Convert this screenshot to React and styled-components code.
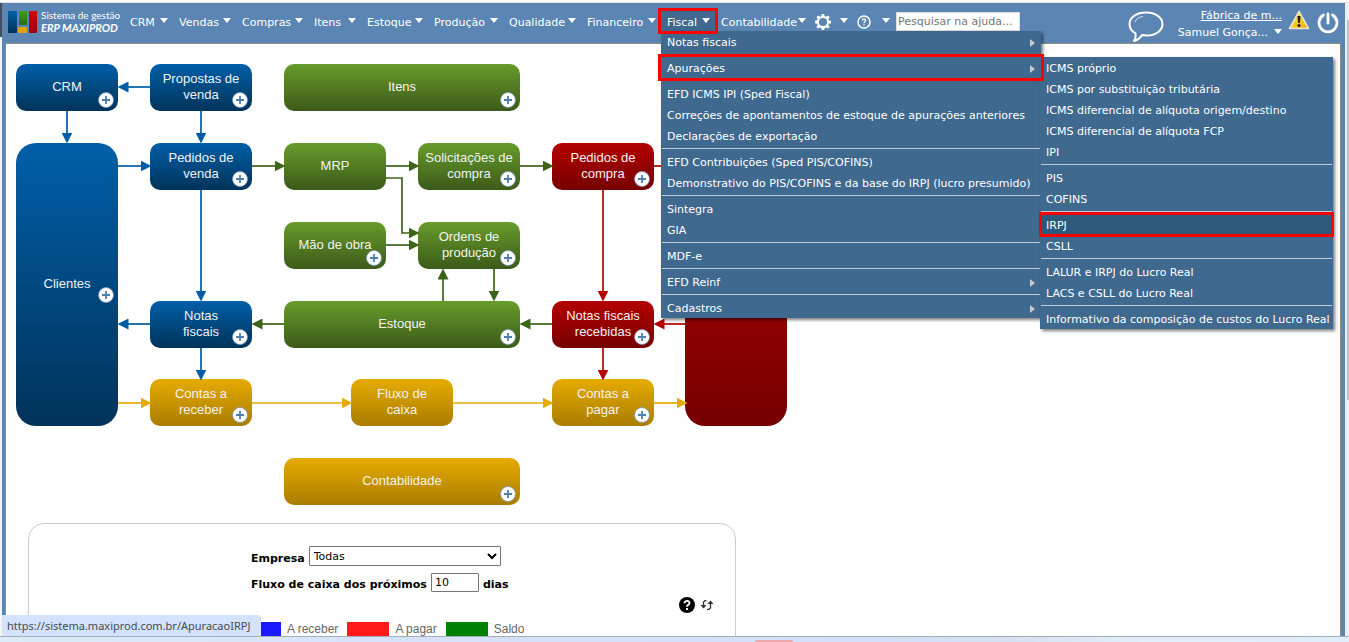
import React from "react";
import styled, { createGlobalStyle, css } from "styled-components";

const GlobalStyle = createGlobalStyle`
  * { box-sizing: border-box; }
  html, body, #root { height: 100%; }
  body { margin: 0; overflow: hidden; background: #f1f1f1; font-family: "DejaVu Sans", sans-serif; font-size: 11px; }
  ul { list-style: none; margin: 0; padding: 0; }
  button, input, select { font: inherit; }
`;

const Window = styled.div`
  height: 100vh;
  display: grid;
  grid-template-rows: 3px minmax(0, 1fr) 6px;
`;

const TopEdge = styled.div`
  background: #fff;
  border-bottom: 1px solid #dedede;
`;

const Viewport = styled.div`
  display: flex;
  min-height: 0;
`;

const LeftEdge = styled.div`
  width: 2px;
  background: linear-gradient(#46505a 34px, #f4f4f4 34px);
`;

const ScrollTrack = styled.div`
  width: 4px;
  padding-top: 17px;
  background: #f1f1f1;
`;

const ScrollThumb = styled.div`
  height: 380px;
  margin-left: 2px;
  background: #c1c1c1;
`;

const Frame = styled.div`
  flex: 1;
  min-width: 0;
  display: flex;
  flex-direction: column;
  background: #5b86b3;
  padding: 0 4px 0 3px;
`;

const Header = styled.header`
  height: 40px;
  flex: none;
  display: flex;
  align-items: flex-start;
  padding-top: 8px;
`;

const Brand = styled.a`
  display: flex;
  gap: 3px;
  width: 119px;
  padding-left: 3px;
  color: #fff;
  text-decoration: none;
  font-family: Lato, sans-serif;
  white-space: nowrap;
`;

const BrandText = styled.span`
  display: flex;
  flex-direction: column;
  margin-top: -2px;
  font-size: 10px;
  line-height: 12px;
`;

const BrandName = styled.em`
  font-size: 11px;
  font-weight: 700;
  line-height: 13px;
`;

const Nav = styled.ul`
  display: flex;
`;

const NavItem = styled.li`
  position: relative;
  width: ${(p) => p.$w}px;
`;

const marker = css`
  &::after {
    content: "";
    position: absolute;
    inset: ${(p) => (p.$tight ? "-2px -1px" : "-3px")};
    z-index: 6;
    border: 3px solid #f00;
    pointer-events: none;
  }
`;

const NavButton = styled.button`
  position: relative;
  display: flex;
  width: 100%;
  height: 20px;
  align-items: center;
  justify-content: space-between;
  padding: 2px ${(p) => (p.$snug ? 3 : 5)}px 0 6px;
  border: 0;
  background: ${(p) => (p.$open ? "#40698f" : "transparent")};
  color: #fff;
  white-space: nowrap;
  ${(p) => p.$open && marker}
`;

const Caret = styled.i`
  border: solid transparent;
  border-width: 5px 4px 0;
  border-top-color: #fff;
  margin-bottom: 3px;
`;

const Menu = styled.ul`
  position: absolute;
  z-index: 5;
  top: ${(p) => (p.$sub ? "0" : "100%")};
  left: ${(p) => (p.$sub ? "379px" : "0")};
  width: ${(p) => (p.$sub ? "293px" : "380px")};
  background: #40698f;
  box-shadow: 2px 2px 3px rgba(0, 0, 0, 0.5);
`;

const MenuItem = styled.li`
  position: relative;
  ${(p) => p.$marked && css`z-index: 1;`}
  ${(p) => p.$marked && marker}
`;

const MenuLink = styled.a`
  display: flex;
  align-items: center;
  justify-content: space-between;
  height: 21px;
  padding: 2px 6px 0;
  color: #fff;
  background: ${(p) => (p.$active ? "#2e587c" : "transparent")};
  text-decoration: none;
  white-space: nowrap;
`;

const MenuArrow = styled.i`
  border: 4px solid transparent;
  border-left: 5px solid #c9c9c9;
  border-right: 0;
`;

const MenuLine = styled.li`
  height: 1px;
  margin: 2px 1px;
  background: #c3ccd5;
`;

const Search = styled.input`
  width: 124px;
  height: 19px;
  margin: 1px 0 0 3px;
  padding: 0 1px;
  border: 1px solid #ddd;
  background: #fff;
  &::placeholder { color: #757575; opacity: 1; }
`;

const Account = styled.div`
  margin: -3px 0 0 auto;
  display: flex;
  align-items: flex-start;
  padding-right: 2px;
  color: #fff;
`;

const User = styled.div`
  display: flex;
  flex-direction: column;
  align-items: flex-end;
  width: 118px;
  margin-top: -1px;
  line-height: 17px;
`;

const UserLink = styled.a`
  color: #fff;
`;

const UserButton = styled.button`
  display: flex;
  align-items: center;
  gap: 6px;
  padding: 0;
  border: 0;
  background: none;
  color: #fff;
  line-height: 17px;
`;

const AccountIcons = styled.div`
  display: flex;
  gap: 7px;
  padding: 2px 0 0 6px;
`;

const IconButton = styled.button`
  display: flex;
  padding: 0;
  border: 0;
  background: none;
`;

const Content = styled.main`
  flex: 1;
  min-height: 0;
  overflow: hidden;
  background: #fff;
  border: 1px solid #8d8d86;
  border-bottom: 0;
`;

const Diagram = styled.section`
  position: relative;
  height: 479px;
`;

const Arrows = styled.svg`
  position: absolute;
  left: 0;
  top: 0;
  pointer-events: none;
`;

const tones = {
  blue: ["#005fa8", "#00335a"],
  green: ["#679c2b", "#3c5a19"],
  red: ["#b40000", "#760000"],
  gold: ["#e6ab00", "#a97d00"],
};

const Node = styled.div`
  position: absolute;
  left: ${(p) => p.$x}px;
  top: ${(p) => p.$y}px;
  width: ${(p) => p.$w || 102}px;
  height: ${(p) => p.$h || 47}px;
  display: flex;
  align-items: center;
  justify-content: center;
  padding-bottom: 2px;
  border-radius: ${(p) => (p.$h ? 20 : 10)}px;
  background: linear-gradient(${(p) => tones[p.$tone][0]}, ${(p) => tones[p.$tone][1]});
  color: #f2f2f2;
  font: 13px/16px "Liberation Sans", Arial, sans-serif;
  text-align: center;
  white-space: pre-line;
`;

const Plus = styled.button`
  position: absolute;
  right: 4px;
  top: ${(p) => (p.$tall ? "144px" : "28px")};
  display: flex;
  padding: 0;
  border: 0;
  background: none;
`;

const Panel = styled.section`
  width: 708px;
  height: 240px;
  margin-left: 22px;
  padding-top: 22px;
  border: 1px solid #ccc;
  border-radius: 16px;
`;

const Filters = styled.form`
  margin-left: 222px;
  display: grid;
  grid-template-columns: 250px;
  gap: 6px;
  font: bold 11px/15px "DejaVu Sans", sans-serif;
`;

const Field = styled.label`
  display: flex;
  align-items: flex-end;
  gap: 4px;
  height: 20px;
  white-space: nowrap;
`;

const Select = styled.select`
  flex: 1;
  height: 20px;
  padding: 0;
  border: 1px solid #767676;
  border-radius: 1px;
  background: #fff;
  color: #000;
  font: 11px "DejaVu Sans", sans-serif;
`;

const Days = styled.input`
  width: 48px;
  height: 19px;
  padding: 0 3px;
  border: 1px solid #767676;
  border-radius: 1px;
  font: 11px "DejaVu Sans", sans-serif;
`;

const Tools = styled.div`
  display: flex;
  justify-content: flex-end;
  gap: 5px;
  padding: 5px 21px 0 0;
`;

const Legend = styled.ul`
  display: flex;
  gap: 9px;
  margin: 9px 0 0 210px;
  font: 12px/14px "Liberation Sans", Arial, sans-serif;
  color: #666;
`;

const LegendItem = styled.li`
  display: flex;
  gap: 6px;
`;

const Swatch = styled.span`
  width: 42px;
  height: 16px;
  background: ${(p) => p.$color};
`;

const StatusBubble = styled.div`
  position: fixed;
  left: 2px;
  bottom: 6px;
  height: 21px;
  min-width: 259px;
  padding: 0 6px 0 5px;
  border-radius: 0 4px 0 0;
  background: #d3e3fd;
  color: #474b50;
  font: 11px/21px "Noto Sans", sans-serif;
`;

const Taskbar = styled.footer`
  border-top: 1px solid #a5adb5;
  background: linear-gradient(90deg, #dcebf8, #d6e2fa 30%, #d3dff8 65%, #d5e0f2 75%, #e2effa 85%, #e0ecfb);
  display: flex;
  align-items: flex-end;
`;

const TaskMark = styled.span`
  width: 38px;
  height: 2px;
  margin-left: 56%;
  background: #eba9ab;
  border-radius: 2px 2px 0 0;
`;

function LogoMark() {
  return (
    <svg width="30" height="22" viewBox="0 0 30 22" aria-hidden="true">
      <defs>
        <linearGradient id="lb" x2="0" y2="1"><stop stopColor="#005fa8" /><stop offset="1" stopColor="#00335a" /></linearGradient>
        <linearGradient id="lg" x2="0" y2="1"><stop stopColor="#43a012" /><stop offset="1" stopColor="#2a6a10" /></linearGradient>
        <linearGradient id="lr" x2="0" y2="1"><stop stopColor="#d60000" /><stop offset="1" stopColor="#9c0010" /></linearGradient>
      </defs>
      <rect width="9" height="22" rx="1" fill="url(#lb)" />
      <rect x="11" width="8" height="14" rx="1" fill="url(#lg)" />
      <rect x="10" y="16" width="9" height="6" rx="1" fill="#dfa30c" />
      <rect x="21" width="8" height="22" rx="1" fill="url(#lr)" />
    </svg>
  );
}

function Gear() {
  return (
    <svg width="16" height="16" viewBox="0 0 16 16" fill="#fff" aria-hidden="true">
      <path fillRule="evenodd" d="M6.800 0h2.400l.5 2.200 1.300.5L13 1.500l1.700 1.700-1.300 1.900.5 1.300 2.100.4v2.400l-2.100.5-.5 1.300 1.200 1.900-1.700 1.700-1.900-1.200-1.300.5-.5 2.100H6.800l-.5-2.100-1.300-.5-1.900 1.200-1.700-1.700 1.200-1.900-.5-1.300L0 9.200V6.800l2.200-.5.5-1.300-1.200-1.900 1.700-1.700 1.900 1.300 1.300-.5ZM8 3.900a4.100 4.100 0 1 0 0 8.200 4.100 4.100 0 0 0 0-8.200Z" />
    </svg>
  );
}

function HelpRing() {
  return (
    <svg width="14" height="14" viewBox="0 0 14 14" fill="none" stroke="#fff" aria-hidden="true">
      <circle cx="7" cy="7" r="6" strokeWidth="1.500" />
      <path d="M5.300 5.500c0-2.300 3.500-2.100 3.300-.2C8.500 6.500 7 6.500 7 8.200M7 9.200v1.300" strokeWidth="1.200" />
    </svg>
  );
}

function Bubble() {
  return (
    <svg width="36" height="34" viewBox="0 0 36 34" fill="none" stroke="#fff" aria-hidden="true">
      <path d="M18 4.500c9.500 0 16.500 5 16.500 11.500S28 27.500 18.500 27.500c-1.500 0-3-.1-4.500-.4-2 3-4.500 5-8 5.900 1.500-2.300 2-4.700 1.400-7.700C3.500 23 1.500 20 1.500 16 1.500 9.500 8.500 4.500 18 4.500Z" strokeWidth="2" strokeLinejoin="round" />
      <path d="M7 14c1-3 4-5 8-5.500" strokeWidth="1" opacity=".8" />
    </svg>
  );
}

function Warning() {
  return (
    <svg width="22" height="20" viewBox="0 0 22 20" aria-hidden="true">
      <defs>
        <linearGradient id="warn" x2="1" y2="1"><stop stopColor="#fff04a" /><stop offset="1" stopColor="#f0a800" /></linearGradient>
      </defs>
      <path d="M11 1.500 20.500 18.500h-19Z" fill="url(#warn)" stroke="#e8e4d0" strokeWidth="1.600" strokeLinejoin="round" />
      <path d="M9.400 6h3.200l-.7 7h-1.800Z" fill="#222" />
      <circle cx="11" cy="15.500" r="1.600" fill="#222" />
    </svg>
  );
}

function Power() {
  return (
    <svg width="22" height="24" viewBox="0 0 22 24" fill="none" stroke="#fff" strokeWidth="2.800" strokeLinecap="round" aria-hidden="true">
      <path d="M6.500 5a9 9 0 1 0 9 0M11 4v9" />
    </svg>
  );
}

function PlusIcon() {
  return (
    <svg width="16" height="16" viewBox="0 0 16 16" aria-hidden="true">
      <circle cx="8" cy="8" r="7.500" fill="#fff" stroke="#7895bb" strokeWidth=".8" />
      <path d="M8 4v8M4 8h8" stroke="#4d7eb0" strokeWidth="1.800" />
    </svg>
  );
}

const navBefore = [["CRM", 49], ["Vendas", 63], ["Compras", 72], ["Itens", 53], ["Estoque", 67], ["Produção", 75], ["Qualidade", 78], ["Financeiro", 80]];

const apuracoes = [
  "ICMS próprio", "ICMS por substituição tributária", "ICMS diferencial de alíquota origem/destino", "ICMS diferencial de alíquota FCP", "IPI", null,
  "PIS", "COFINS", null, "IRPJ", "CSLL", null,
  "LALUR e IRPJ do Lucro Real", "LACS e CSLL do Lucro Real", null, "Informativo da composição de custos do Lucro Real",
];

const fiscal = [
  { t: "Notas fiscais", more: true }, null, { t: "Apurações", more: true, sub: apuracoes }, null,
  { t: "EFD ICMS IPI (Sped Fiscal)" }, { t: "Correções de apontamentos de estoque de apurações anteriores" }, { t: "Declarações de exportação" }, null,
  { t: "EFD Contribuições (Sped PIS/COFINS)" }, { t: "Demonstrativo do PIS/COFINS e da base do IRPJ (lucro presumido)" }, null,
  { t: "Sintegra" }, { t: "GIA" }, null, { t: "MDF-e" }, null, { t: "EFD Reinf", more: true }, null, { t: "Cadastros", more: true },
];

const nodes = [
  { t: "CRM", x: 10, y: 20, tone: "blue", plus: true },
  { t: "Propostas de\nvenda", x: 144, y: 20, tone: "blue", plus: true },
  { t: "Itens", x: 278, y: 20, w: 236, tone: "green", plus: true },
  { t: "Clientes", x: 10, y: 99, h: 283, tone: "blue", plus: true },
  { t: "Pedidos de\nvenda", x: 144, y: 99, tone: "blue", plus: true },
  { t: "MRP", x: 278, y: 99, tone: "green" },
  { t: "Solicitações de\ncompra", x: 412, y: 99, tone: "green", plus: true },
  { t: "Pedidos de\ncompra", x: 546, y: 99, tone: "red", plus: true },
  { t: "", x: 679, y: 99, h: 283, tone: "red" },
  { t: "Mão de obra", x: 278, y: 178, tone: "green", plus: true },
  { t: "Ordens de\nprodução", x: 412, y: 178, tone: "green", plus: true },
  { t: "Notas\nfiscais", x: 144, y: 257, tone: "blue", plus: true },
  { t: "Estoque", x: 278, y: 257, w: 236, tone: "green", plus: true },
  { t: "Notas fiscais\nrecebidas", x: 546, y: 257, tone: "red", plus: true },
  { t: "Contas a\nreceber", x: 144, y: 335, tone: "gold", plus: true },
  { t: "Fluxo de\ncaixa", x: 345, y: 335, tone: "gold" },
  { t: "Contas a\npagar", x: 546, y: 335, tone: "gold", plus: true },
  { t: "Contabilidade", x: 278, y: 414, w: 236, tone: "gold", plus: true },
];

const lineColors = { blue: "#005ca6", green: "#3c6318", red: "#b40000", gold: "#e6ab00" };

const links = [
  ["blue", "M144 43H117"], ["blue", "M61 67V94"], ["blue", "M195 67V94"], ["blue", "M112 122H140"],
  ["blue", "M195 146V252"], ["blue", "M144 280H117"], ["blue", "M195 304V331"],
  ["green", "M246 122H274"], ["green", "M380 122H408"], ["green", "M380 134H396V189H408"], ["green", "M380 201H408"],
  ["green", "M514 122H542"], ["green", "M437 257V230"], ["green", "M488 225V252"], ["green", "M278 280H251"], ["green", "M546 280H519"],
  ["red", "M597 146V252"], ["red", "M648 122H675"], ["red", "M679 280H653"], ["red", "M597 304V331"],
  ["gold", "M112 359H140"], ["gold", "M246 359H341"], ["gold", "M447 359H542"], ["gold", "M648 359H676"],
];

function Flow() {
  return (
    <Diagram>
      {nodes.map((n, i) => (
        <Node key={i} $x={n.x} $y={n.y} $w={n.w} $h={n.h} $tone={n.tone}>
          {n.t}
          {n.plus && <Plus type="button" aria-label={"Novo: " + n.t} $tall={!!n.h}><PlusIcon /></Plus>}
        </Node>
      ))}
      <Arrows width="800" height="479" fill="none" strokeWidth="1.700" aria-hidden="true">
        <defs>
          {Object.entries(lineColors).map(([k, c]) => (
            <marker key={k} id={"tip-" + k} viewBox="0 0 10 10" refX="5" refY="5" markerWidth="11" markerHeight="11" markerUnits="userSpaceOnUse" orient="auto">
              <path d="M0 0 10 5 0 10Z" fill={c} />
            </marker>
          ))}
        </defs>
        {links.map(([k, d]) => <path key={d} d={d} stroke={lineColors[k]} markerEnd={`url(#tip-${k})`} />)}
      </Arrows>
    </Diagram>
  );
}

function FiscalMenu() {
  return (
    <Menu>
      {fiscal.map((m, i) => m ? (
        <MenuItem key={i} $marked={!!m.sub}>
          <MenuLink href="#">{m.t}{m.more && <MenuArrow />}</MenuLink>
          {m.sub && (
            <Menu $sub>
              {m.sub.map((s, j) => s ? (
                <MenuItem key={j} $tight $marked={s === "IRPJ"}><MenuLink href="#" $active={s === "IRPJ"}>{s}</MenuLink></MenuItem>
              ) : <MenuLine key={j} />)}
            </Menu>
          )}
        </MenuItem>
      ) : <MenuLine key={i} />)}
    </Menu>
  );
}

export default function App() {
  return (
    <>
      <GlobalStyle />
      <Window>
        <TopEdge />
        <Viewport>
          <LeftEdge />
          <Frame>
            <Header>
              <Brand href="#">
                <LogoMark />
                <BrandText>Sistema de gestão<BrandName>ERP MAXIPROD</BrandName></BrandText>
              </Brand>
              <Nav>
                {navBefore.map(([t, w]) => (
                  <NavItem key={t} $w={w}><NavButton type="button">{t}<Caret /></NavButton></NavItem>
                ))}
                <NavItem $w={54}>
                  <NavButton type="button" $open>Fiscal<Caret /></NavButton>
                  <FiscalMenu />
                </NavItem>
                <NavItem $w={94}><NavButton type="button" $snug>Contabilidade<Caret /></NavButton></NavItem>
                <NavItem $w={42}><NavButton type="button" $snug aria-label="Configurações"><Gear /><Caret /></NavButton></NavItem>
                <NavItem $w={42}><NavButton type="button" $snug aria-label="Ajuda"><HelpRing /><Caret /></NavButton></NavItem>
              </Nav>
              <Search aria-label="Pesquisar na ajuda" placeholder="Pesquisar na ajuda..." />
              <Account>
                <IconButton type="button" aria-label="Mensagens"><Bubble /></IconButton>
                <User>
                  <UserLink href="#">Fábrica de m...</UserLink>
                  <UserButton type="button">Samuel Gonça...<Caret /></UserButton>
                </User>
                <AccountIcons>
                  <IconButton type="button" aria-label="Avisos"><Warning /></IconButton>
                  <IconButton type="button" aria-label="Sair"><Power /></IconButton>
                </AccountIcons>
              </Account>
            </Header>
            <Content>
              <Flow />
              <Panel>
                <Filters>
                  <Field>Empresa<Select defaultValue="Todas"><option>Todas</option></Select></Field>
                  <Field>Fluxo de caixa dos próximos<Days defaultValue="10" />dias</Field>
                </Filters>
                <Tools>
                  <IconButton type="button" aria-label="Ajuda do gráfico">
                    <svg width="16" height="16" viewBox="0 0 16 16"><circle cx="8" cy="8" r="8" fill="#000" /><path d="M5.500 6.300c0-3.300 5.200-3 5-.2C10.400 7.800 8 7.600 8 9.700M8 11v2" fill="none" stroke="#fff" strokeWidth="1.900" /></svg>
                  </IconButton>
                  <IconButton type="button" aria-label="Atualizar">
                    <svg width="14" height="16" viewBox="0 0 14 16" fill="none" stroke="#333" strokeWidth="1.300"><path d="M6.500 3.700H5L3.500 5v6M7 12.300h2l1.500-1.300V5" /><path d="M.5 8h6L3.500 11.500ZM7.500 7h6L10.500 3.500Z" fill="#333" stroke="none" /></svg>
                  </IconButton>
                </Tools>
                <Legend>
                  <LegendItem><Swatch $color="#1919ff" />A receber</LegendItem>
                  <LegendItem><Swatch $color="#ff1919" />A pagar</LegendItem>
                  <LegendItem><Swatch $color="#008000" />Saldo</LegendItem>
                </Legend>
              </Panel>
            </Content>
          </Frame>
          <ScrollTrack><ScrollThumb /></ScrollTrack>
        </Viewport>
        <Taskbar><TaskMark /></Taskbar>
      </Window>
      <StatusBubble>https://sistema.maxiprod.com.br/ApuracaoIRPJ</StatusBubble>
    </>
  );
}
